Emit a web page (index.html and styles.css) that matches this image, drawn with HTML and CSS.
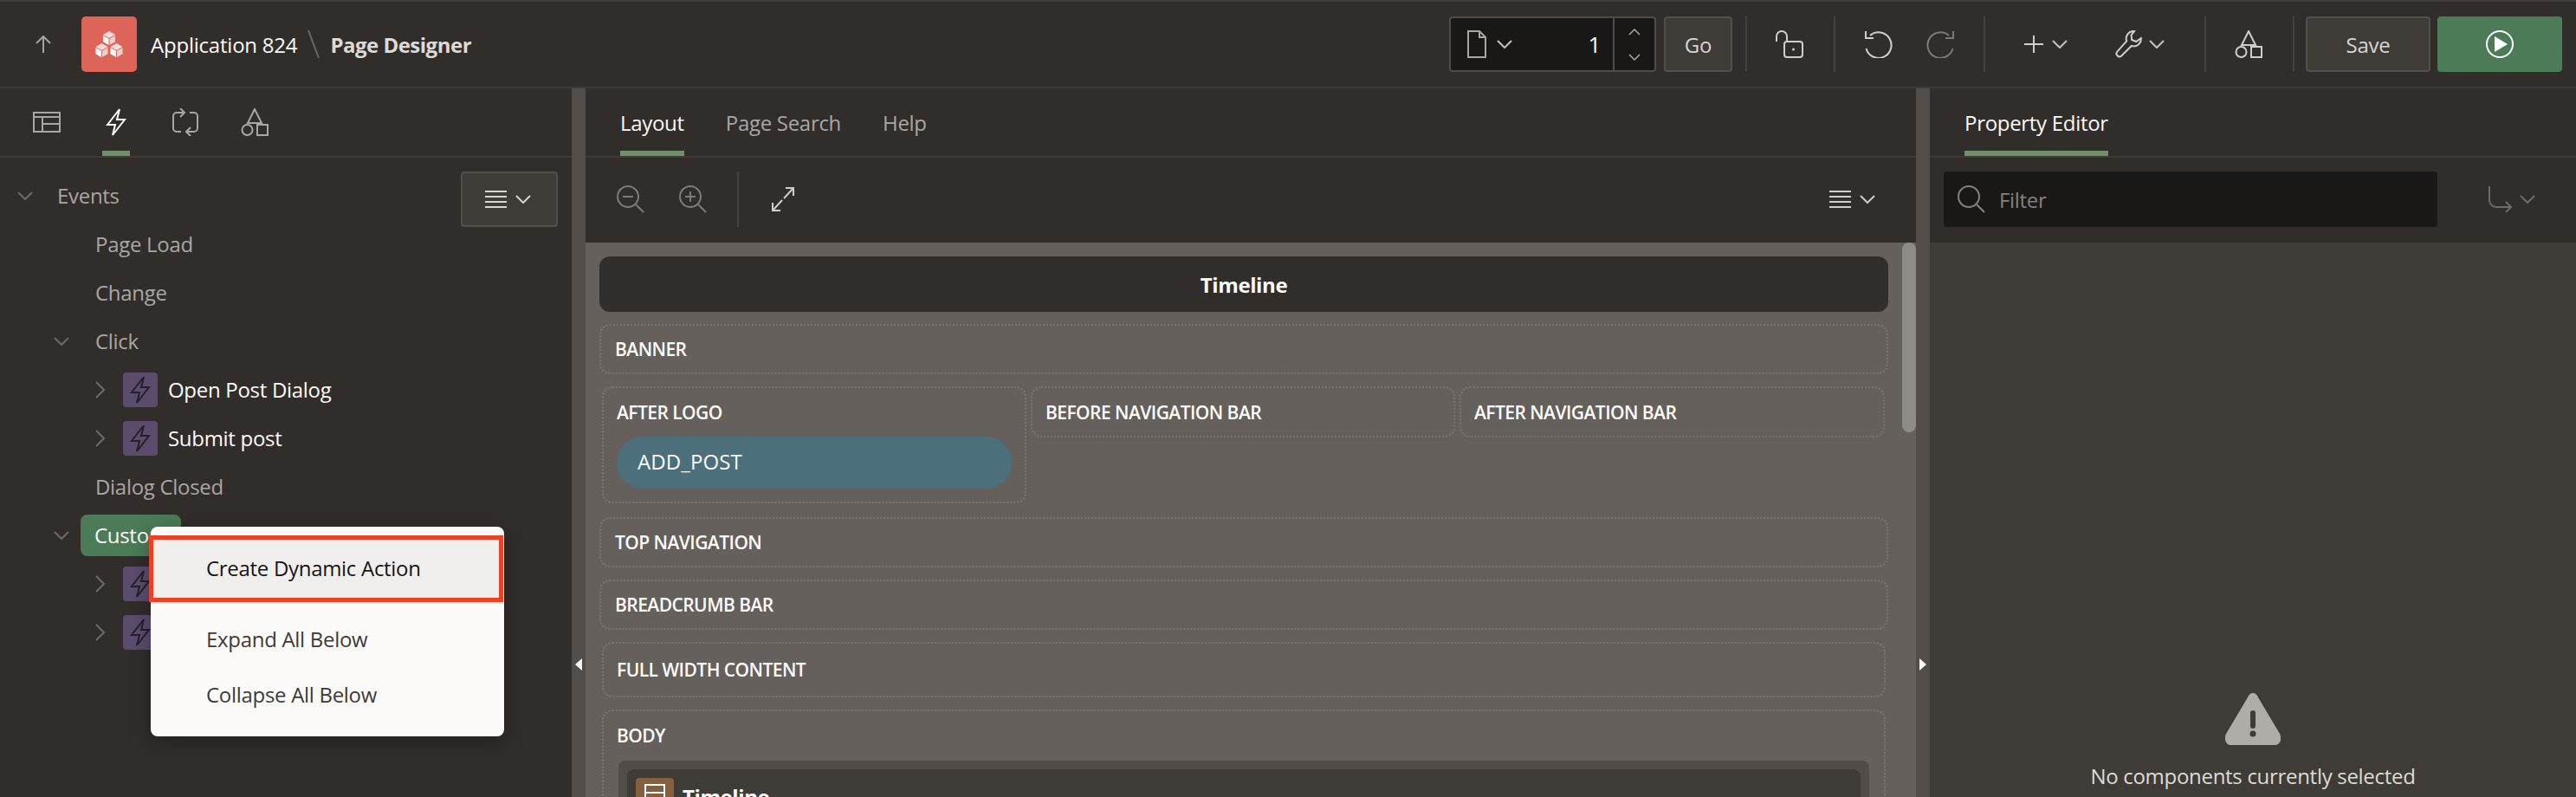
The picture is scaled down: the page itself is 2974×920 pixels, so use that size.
FILE: index.html
```html
<!DOCTYPE html>
<html lang="en">
<head>
    <meta charset="UTF-8">
    <title>Page Designer</title>
    <link rel="stylesheet" href="styles.css">
</head>
<body>
    <svg class="sprites" width="0" height="0">
        <symbol id="chev-down" viewBox="0 0 18 10"><path d="M1 1l8 8 8-8" fill="none" stroke="currentColor" stroke-width="2"/></symbol>
        <symbol id="chev-right" viewBox="0 0 12 20"><path d="M1 1l9 9-9 9" fill="none" stroke="currentColor" stroke-width="2"/></symbol>
        <symbol id="bolt" viewBox="0 0 24 32"><path d="M16 1L2 19h9L8 31l14-18h-9z" fill="none" stroke="currentColor" stroke-width="2"/></symbol>
        <symbol id="shapes" viewBox="0 0 32 32"><g fill="none" stroke="currentColor" stroke-width="2"><path d="M16 1l8 16H8z"/><circle cx="7.5" cy="25" r="6"/><rect x="19" y="19" width="12" height="12"/></g></symbol>
        <symbol id="lines" viewBox="0 0 25 20"><path d="M0 1h25M0 7h25M0 13h25M0 19h25" fill="none" stroke="currentColor" stroke-width="2"/></symbol>
        <symbol id="glass" viewBox="0 0 32 32"><g fill="none" stroke="currentColor" stroke-width="2"><circle cx="13" cy="13" r="12"/><path d="M22 22l9 9"/></g></symbol>
    </svg>

    <div class="app">
        <header class="topbar">
            <svg class="up-arrow" width="18" height="20" viewBox="0 0 18 20"><path d="M9 20V2M1 9l8-8 8 8" fill="none" stroke="currentColor" stroke-width="2"/></svg>
            <div class="app-logo">
                <svg width="32" height="30" viewBox="0 0 32 30">
                    <g id="cube">
                        <path d="M16 0l7 4-7 4-7-4z" fill="#f9dcd8"/>
                        <path d="M9 5l6.500 3.700v7.300L9 12.300z" fill="#fff"/>
                        <path d="M23 5l-6.500 3.700v7.300l6.500-3.700z" fill="#f6cdc7"/>
                    </g>
                    <use href="#cube" x="-8.500" y="14"/>
                    <use href="#cube" x="8.500" y="14"/>
                </svg>
            </div>
            <span class="app-name">Application 824</span>
            <svg class="crumb-slash" width="14" height="32" viewBox="0 0 14 32"><path d="M1 0l12 32" stroke="currentColor" stroke-width="2"/></svg>
            <span class="page-title">Page Designer</span>

            <div class="page-box">
                <div class="page-field">
                    <svg class="page-icon" width="24" height="32" viewBox="0 0 24 32"><path d="M2 1h13l7 7v23H2zM15 1v7h7" fill="none" stroke="currentColor" stroke-width="2"/></svg>
                    <svg class="chev ml-11" width="18" height="10"><use href="#chev-down"/></svg>
                    <span class="page-num">1</span>
                </div>
                <div class="page-step">
                    <svg width="14" height="8" viewBox="0 0 14 8"><path d="M1 7l6-6 6 6" fill="none" stroke="currentColor" stroke-width="1.500"/></svg>
                    <svg width="14" height="8" viewBox="0 0 14 8"><path d="M1 1l6 6 6-6" fill="none" stroke="currentColor" stroke-width="1.500"/></svg>
                </div>
            </div>
            <button class="btn go-btn">Go</button>
            <span class="tool-sep ml-15"></span>
            <svg class="tool-icon ml-33" width="32" height="32" viewBox="0 0 32 32"><g fill="none" stroke="currentColor" stroke-width="2"><rect x="10" y="13" width="21" height="18" rx="3"/><path d="M1 13V7a6 6 0 0 1 12 0v5"/></g><circle cx="20.500" cy="22" r="1.500" fill="currentColor"/></svg>
            <span class="tool-sep ml-35"></span>
            <svg class="tool-icon ml-34" width="32" height="32" viewBox="0 0 32 32"><path d="M6 6a14.800 14.800 0 1 1-4.500 15M1 1v8h9" fill="none" stroke="currentColor" stroke-width="2"/></svg>
            <svg class="tool-icon tool-off ml-39" width="32" height="32" viewBox="0 0 32 32"><path d="M26 6a14.800 14.800 0 1 0 4.500 15M31 1v8h-9" fill="none" stroke="currentColor" stroke-width="2"/></svg>
            <span class="tool-sep ml-34"></span>
            <svg class="tool-icon ml-44" width="24" height="24" viewBox="0 0 24 24"><path d="M12 2v20M1 12h22" stroke="currentColor" stroke-width="2"/></svg>
            <svg class="chev ml-9" width="18" height="10"><use href="#chev-down"/></svg>
            <svg class="tool-icon ml-55" width="32" height="32" viewBox="0 0 32 32"><path d="M22 1a8.500 8.500 0 0 0-8.800 11.400L2.400 24.600a3.400 3.400 0 0 0 4.800 4.800L18.800 18a8.500 8.500 0 0 0 11-9l-5.600 4-5-2-.6-5.500z" fill="none" stroke="currentColor" stroke-width="2"/></svg>
            <svg class="chev ml-7" width="18" height="10"><use href="#chev-down"/></svg>
            <span class="tool-sep ml-46"></span>
            <svg class="tool-icon ml-33" width="32" height="32"><use href="#shapes"/></svg>
            <span class="tool-sep ml-35"></span>
            <button class="btn save-btn ml-13">Save</button>
            <button class="run-btn ml-8">
                <svg width="32" height="32" viewBox="0 0 32 32"><circle cx="16" cy="16" r="15" fill="none" stroke="#fff" stroke-width="2"/><path d="M10 7l15 9-15 9z" fill="#fff"/></svg>
            </button>
        </header>

        <main class="workspace">
            <section class="left-panel">
                <div class="tabs">
                    <div class="icon-tab tab-first">
                        <svg width="32" height="24" viewBox="0 0 32 24"><path d="M1 1h30v22H1zM1 6h30M11 6v17M11 14h20" fill="none" stroke="currentColor" stroke-width="2"/></svg>
                    </div>
                    <div class="icon-tab is-active">
                        <svg width="24" height="32"><use href="#bolt"/></svg>
                    </div>
                    <div class="icon-tab">
                        <svg width="32" height="32" viewBox="0 0 32 32"><path d="M14 5H6a4 4 0 0 0-4 4v14a4 4 0 0 0 4 4h5M18 27h8a4 4 0 0 0 4-4V9a4 4 0 0 0-4-4h-5M10 0l5 5-5 5M22 22l-5 5 5 5" fill="none" stroke="currentColor" stroke-width="2"/></svg>
                    </div>
                    <div class="icon-tab">
                        <svg width="32" height="32"><use href="#shapes"/></svg>
                    </div>
                </div>
                <div class="tree">
                    <div class="tree-row">
                        <svg class="tree-toggle" width="18" height="10"><use href="#chev-down"/></svg>
                        <span class="tree-head">Events</span>
                        <button class="btn tree-menu-btn">
                            <svg width="25" height="20"><use href="#lines"/></svg>
                            <svg width="18" height="10"><use href="#chev-down"/></svg>
                        </button>
                    </div>
                    <div class="tree-row lvl-1"><span class="tree-label">Page Load</span></div>
                    <div class="tree-row lvl-1"><span class="tree-label">Change</span></div>
                    <div class="tree-row lvl-0b">
                        <svg class="tree-toggle" width="18" height="10"><use href="#chev-down"/></svg>
                        <span class="tree-label">Click</span>
                    </div>
                    <div class="tree-row lvl-2">
                        <svg class="tree-open" width="12" height="20"><use href="#chev-right"/></svg>
                        <span class="bolt-badge"><svg width="24" height="32"><use href="#bolt"/></svg></span>
                        <span class="tree-action">Open Post Dialog</span>
                    </div>
                    <div class="tree-row lvl-2">
                        <svg class="tree-open" width="12" height="20"><use href="#chev-right"/></svg>
                        <span class="bolt-badge"><svg width="24" height="32"><use href="#bolt"/></svg></span>
                        <span class="tree-action">Submit post</span>
                    </div>
                    <div class="tree-row lvl-1"><span class="tree-label">Dialog Closed</span></div>
                    <div class="tree-row lvl-0b">
                        <svg class="tree-toggle" width="18" height="10"><use href="#chev-down"/></svg>
                        <span class="tree-selected">Custom</span>
                    </div>
                    <div class="tree-row lvl-2">
                        <svg class="tree-open" width="12" height="20"><use href="#chev-right"/></svg>
                        <span class="bolt-badge"><svg width="24" height="32"><use href="#bolt"/></svg></span>
                    </div>
                    <div class="tree-row lvl-2">
                        <svg class="tree-open" width="12" height="20"><use href="#chev-right"/></svg>
                        <span class="bolt-badge"><svg width="24" height="32"><use href="#bolt"/></svg></span>
                    </div>
                </div>

                <div class="context-menu">
                    <div class="menu-item menu-hot">Create Dynamic Action</div>
                    <div class="menu-sep"></div>
                    <div class="menu-item">Expand All Below</div>
                    <div class="menu-item">Collapse All Below</div>
                </div>
            </section>

            <div class="splitter"><span class="tri-left"></span></div>

            <section class="center-panel">
                <div class="tabs tabs-text">
                    <div class="text-tab is-active">Layout</div>
                    <div class="text-tab">Page Search</div>
                    <div class="text-tab">Help</div>
                </div>
                <div class="toolbar">
                    <svg class="zoom-icon" width="32" height="32"><use href="#glass"/><path d="M7 13h12" stroke="currentColor" stroke-width="2"/></svg>
                    <svg class="zoom-icon ml-40" width="32" height="32"><use href="#glass"/><path d="M7 13h12M13 7v12" stroke="currentColor" stroke-width="2"/></svg>
                    <span class="tool-sep ml-35"></span>
                    <svg class="expand-icon" width="26" height="28" viewBox="0 0 26 28"><path d="M16 1h9v9M25 1L14 13M1 18v9h9M1 27l11-12" fill="none" stroke="currentColor" stroke-width="2"/></svg>
                    <div class="toolbar-menu">
                        <svg width="25" height="20"><use href="#lines"/></svg>
                        <svg width="18" height="10"><use href="#chev-down"/></svg>
                    </div>
                </div>
                <div class="canvas">
                    <div class="page-bar">Timeline</div>
                    <div class="region">BANNER</div>
                    <div class="region-row">
                        <div class="region-cell region-logo">
                            <div class="cell-label">AFTER LOGO</div>
                            <div class="button-chip">ADD_POST</div>
                        </div>
                        <div class="region-cell"><div class="cell-label">BEFORE NAVIGATION BAR</div></div>
                        <div class="region-cell"><div class="cell-label">AFTER NAVIGATION BAR</div></div>
                    </div>
                    <div class="region">TOP NAVIGATION</div>
                    <div class="region">BREADCRUMB BAR</div>
                    <div class="region region-full">FULL WIDTH CONTENT</div>
                    <div class="region-body">
                        <div class="cell-label">BODY</div>
                        <div class="comp-outer">
                            <div class="comp-inner">
                                <span class="comp-badge">
                                    <svg width="24" height="30" viewBox="0 0 24 30"><path d="M1 1h22v28H1zM1 10h22M1 19h22" fill="none" stroke="#fff" stroke-width="2"/></svg>
                                </span>
                                <span class="comp-title">Timeline</span>
                            </div>
                        </div>
                    </div>
                    <div class="canvas-scroll"></div>
                </div>
            </section>

            <div class="splitter"><span class="tri-right"></span></div>

            <section class="right-panel">
                <div class="tabs tabs-prop">
                    <div class="text-tab is-active">Property Editor</div>
                </div>
                <div class="toolbar toolbar-prop">
                    <div class="filter-box">
                        <svg class="filter-icon" width="32" height="32"><use href="#glass"/></svg>
                        <span class="filter-text">Filter</span>
                    </div>
                    <svg class="go-to-icon" width="28" height="30" viewBox="0 0 28 30"><path d="M2 0v16a8 8 0 0 0 8 8h17M21 18l6 6-6 6" fill="none" stroke="currentColor" stroke-width="2"/></svg>
                    <svg class="go-to-icon ml-9" width="18" height="10"><use href="#chev-down"/></svg>
                </div>
                <div class="prop-body">
                    <svg width="64" height="60" viewBox="0 0 64 60">
                        <path d="M32 0c-3 0-5 2-6 5L1 47c-3 7 0 13 6 13h50c6 0 9-6 6-13L38 5c-1-3-3-5-6-5z" fill="#aeada8"/>
                        <rect x="29" y="20" width="6" height="21" rx="3" fill="#3f3b36"/>
                        <circle cx="32" cy="47" r="3.500" fill="#3f3b36"/>
                    </svg>
                    <div class="prop-empty">No components currently selected</div>
                </div>
            </section>
        </main>
    </div>
</body>
</html>
```

FILE: styles.css
```css
* {
    box-sizing: border-box;
}
html, body {
    margin: 0;
    height: 100%;
    overflow: hidden;
}
body {
    font-family: "Open Sans", "Noto Sans", sans-serif;
    font-size: 24px;
    letter-spacing: -0.3px;
    background-color: #312d2a;
    color: #b5b3b0;
}
.sprites {
    display: block;
    height: 0;
}
.app {
    height: 920px;
    display: flex;
    flex-direction: column;
    overflow: hidden;
}

.ml-7 { margin-left: 7px; }
.ml-8 { margin-left: 8px; }
.ml-9 { margin-left: 9px; }
.ml-11 { margin-left: 11px; }
.ml-13 { margin-left: 13px; }
.ml-15 { margin-left: 15px; }
.ml-33 { margin-left: 33px; }
.ml-34 { margin-left: 34px; }
.ml-35 { margin-left: 35px; }
.ml-39 { margin-left: 39px; }
.ml-40 { margin-left: 40px; }
.ml-44 { margin-left: 44px; }
.ml-46 { margin-left: 46px; }
.ml-55 { margin-left: 55px; }

/* top bar */
.topbar {
    height: 102px;
    flex: none;
    display: flex;
    align-items: center;
    padding: 0 16px 0 41px;
    border-top: 2px solid #3f3b37;
    border-bottom: 2px solid #3f3b37;
    background-color: #312d2a;
}
.up-arrow {
    color: #a5a3a0;
}
.app-logo {
    width: 64px;
    height: 64px;
    margin-left: 35px;
    display: flex;
    align-items: center;
    justify-content: center;
    background-color: #dc6459;
    border-radius: 5px;
}
.app-name {
    margin-left: 16px;
    color: #fcfbfa;
    letter-spacing: -0.22px;
}
.crumb-slash {
    margin-left: 12px;
    color: #6a6661;
}
.page-title {
    margin-left: 12px;
    color: #dddbd8;
    font-weight: 700;
    letter-spacing: -0.5px;
}
.page-box {
    margin-left: auto;
    width: 239px;
    height: 64px;
    display: flex;
    background-color: #191817;
    border: 2px solid #4f4b46;
    border-radius: 4px;
}
.page-field {
    flex: 1;
    display: flex;
    align-items: center;
    padding: 0 14px 0 18px;
    color: #a9a7a4;
}
.page-num {
    margin-left: auto;
    color: #fcfbfa;
    font-size: 26px;
}
.page-step {
    width: 48px;
    display: flex;
    flex-direction: column;
    align-items: center;
    justify-content: center;
    gap: 21px;
    border-left: 2px solid #4f4b46;
    color: #a9a7a4;
}
.btn {
    height: 64px;
    padding: 0;
    font: inherit;
    letter-spacing: inherit;
    color: #d8d6d3;
    background-color: #3f3b37;
    border: 2px solid #534f4a;
    border-radius: 4px;
}
.go-btn {
    width: 79px;
    margin-left: 9px;
}
.save-btn {
    width: 144px;
}
.run-btn {
    width: 144px;
    height: 64px;
    padding: 0;
    display: flex;
    align-items: center;
    justify-content: center;
    background-color: #4b7b57;
    border: none;
    border-radius: 4px;
}
.tool-sep {
    width: 2px;
    height: 64px;
    flex: none;
    background-color: #45413d;
}
.tool-icon {
    flex: none;
    color: #d0cecb;
}
.tool-off {
    color: #7d7975;
}
.chev {
    flex: none;
    color: #c4c2bf;
}

/* main area */
.workspace {
    flex: 1;
    display: flex;
    min-height: 0;
}
.left-panel {
    width: 660px;
    flex: none;
    position: relative;
}
.center-panel {
    width: 1536px;
    flex: none;
    display: flex;
    flex-direction: column;
}
.right-panel {
    flex: 1;
    display: flex;
    flex-direction: column;
}
.splitter {
    width: 16px;
    flex: none;
    display: flex;
    justify-content: center;
    align-items: flex-start;
    padding-top: 658px;
    background-color: #524d48;
}
.tri-left, .tri-right {
    width: 0;
    height: 0;
    border-top: 7px solid transparent;
    border-bottom: 7px solid transparent;
}
.tri-left {
    border-right: 8px solid #fcfbfa;
}
.tri-right {
    border-left: 8px solid #fcfbfa;
}

/* tabs */
.tabs {
    height: 80px;
    flex: none;
    display: flex;
    border-bottom: 2px solid #3f3b37;
}
.tabs-text {
    padding-left: 40px;
    gap: 48px;
}
.tabs-prop {
    padding-left: 40px;
}
.icon-tab, .text-tab {
    height: 78px;
    padding-top: 6px;
    display: flex;
    align-items: center;
    justify-content: center;
    border-bottom: 6px solid transparent;
    color: #a9a7a4;
}
.icon-tab {
    width: 32px;
    margin-left: 48px;
}
.tab-first {
    margin-left: 38px;
}
.icon-tab.is-active, .text-tab.is-active {
    border-bottom-color: #6f9068;
    color: #fcfbfa;
}

/* tree */
.tree {
    padding-top: 16px;
}
.tree-row {
    height: 56px;
    display: flex;
    align-items: center;
    padding-left: 20px;
    color: #a9a7a4;
}
.tree-head, .tree-label, .tree-action {
    padding-bottom: 2px;
}
.tree-head {
    margin-left: 28px;
}
.tree-toggle {
    flex: none;
    color: #6f6b67;
}
.lvl-1 {
    padding-left: 110px;
}
.lvl-0b {
    padding-left: 62px;
}
.lvl-0b .tree-label {
    margin-left: 30px;
}
.lvl-2 {
    padding-left: 110px;
}
.tree-open {
    flex: none;
    color: #6f6b67;
}
.bolt-badge {
    width: 40px;
    height: 40px;
    margin-left: 20px;
    display: flex;
    align-items: center;
    justify-content: center;
    background-color: #5b4c6d;
    border-radius: 4px;
    color: #231f2a;
}
.tree-action {
    margin-left: 12px;
    color: #fcfbfa;
}
.tree-selected {
    width: 116px;
    height: 48px;
    margin-left: 13px;
    padding: 0 0 2px 16px;
    display: flex;
    align-items: center;
    background-color: #4b7b57;
    border-radius: 8px;
    color: #fcfbfa;
}
.tree-menu-btn {
    width: 112px;
    margin-left: auto;
    margin-right: 16px;
    padding-right: 3px;
    align-self: flex-start;
    margin-bottom: -8px;
    display: flex;
    align-items: center;
    justify-content: center;
    gap: 10px;
}

/* context menu sits over the tree */
.context-menu {
    position: absolute;
    top: 506px;
    left: 174px;
    width: 408px;
    height: 242px;
    padding-top: 10px;
    background-color: #fcfbfa;
    border-radius: 8px;
    box-shadow: 0 6px 24px rgba(0, 0, 0, 0.3);
    color: #3d3a37;
}
.menu-item {
    height: 64px;
    padding: 0 0 2px 64px;
    display: flex;
    align-items: center;
}
.menu-hot {
    width: 409px;
    height: 77px;
    margin-left: -2px;
    padding: 0 0 2px 61px;
    background-color: #f1efee;
    border: 5px solid #ee4023;
    color: #161513;
}
.menu-sep {
    height: 2px;
    margin-bottom: 9px;
    background-color: #eeecea;
}

/* center panel */
.toolbar {
    height: 98px;
    flex: none;
    display: flex;
    align-items: center;
    padding: 0 40px 2px 36px;
}
.zoom-icon {
    flex: none;
    color: #7f7b77;
}
.expand-icon {
    flex: none;
    margin-left: 38px;
    color: #d0cecb;
}
.toolbar-menu {
    margin-left: auto;
    margin-right: 7px;
    display: flex;
    align-items: center;
    gap: 10px;
    color: #d0cecb;
}
.canvas {
    position: relative;
    flex: 1;
    min-height: 0;
    display: flex;
    flex-direction: column;
    gap: 14px;
    padding: 16px 32px 0 16px;
    overflow: hidden;
    background-color: #65605b;
    color: #fcfbfa;
}
.canvas-scroll {
    position: absolute;
    top: 0;
    right: 0;
    width: 16px;
    height: 219px;
    background-color: #8f8b86;
    border-radius: 8px;
}
.page-bar {
    height: 64px;
    flex: none;
    display: flex;
    align-items: center;
    justify-content: center;
    background-color: #312d2a;
    border-radius: 12px;
    font-weight: 700;
    letter-spacing: -0.4px;
}
.region, .region-cell, .region-body {
    border: 2px dotted rgba(255, 255, 255, 0.13);
    border-radius: 12px;
    font-size: 21px;
    font-weight: 600;
    letter-spacing: -0.55px;
}
.region {
    height: 58px;
    flex: none;
    display: flex;
    align-items: center;
    padding-left: 16px;
}
.region-full {
    height: 64px;
    margin: 0 3px;
    padding-left: 15px;
}
.region-row {
    height: 137px;
    flex: none;
    margin: 0 3px;
    display: grid;
    grid-template-columns: 490px 490px 491px;
    gap: 6px 5px;
    align-items: start;
}
.region-cell {
    height: 59px;
}
.region-logo {
    height: 135px;
}
.cell-label {
    height: 56px;
    padding-left: 15px;
    display: flex;
    align-items: center;
}
.button-chip {
    width: 456px;
    height: 60px;
    margin-left: 15px;
    padding: 0 0 3px 24px;
    display: flex;
    align-items: center;
    background-color: #4c6f7c;
    border-radius: 30px;
    font-size: 24px;
    font-weight: 400;
    letter-spacing: 0.1px;
}
.region-body {
    height: 300px;
    flex: none;
    margin: 0 3px;
}
.comp-outer {
    margin: 1px 17px 0 17px;
    padding: 10px 10px 0;
    height: 200px;
    background-color: #514c47;
    border-radius: 8px;
}
.comp-inner {
    height: 190px;
    padding: 10px;
    display: flex;
    align-items: flex-start;
    gap: 10px;
    background-color: #3f3b36;
    border-radius: 8px;
}
.comp-badge {
    width: 44px;
    height: 44px;
    padding-top: 7px;
    display: flex;
    justify-content: center;
    background-color: #84603f;
    border-radius: 4px;
}
.comp-title {
    line-height: 44px;
    font-size: 24px;
    font-weight: 700;
    letter-spacing: -0.4px;
}

/* right panel */
.toolbar-prop {
    padding: 0 47px 2px 16px;
}
.filter-box {
    width: 570px;
    height: 64px;
    display: flex;
    align-items: center;
    padding-left: 16px;
    background-color: #191817;
    border-radius: 4px;
}
.filter-icon {
    color: #85817d;
}
.filter-text {
    margin-left: 16px;
    color: #85817d;
}
.go-to-icon {
    flex: none;
    color: #6f6b67;
}
.go-to-icon:first-of-type {
    margin-left: 58px;
}
.prop-body {
    flex: 1;
    min-height: 0;
    display: flex;
    flex-direction: column;
    align-items: center;
    padding-top: 520px;
    background-color: #3f3b36;
}
.prop-empty {
    margin-top: 19px;
    color: #dddbd8;
}
```
